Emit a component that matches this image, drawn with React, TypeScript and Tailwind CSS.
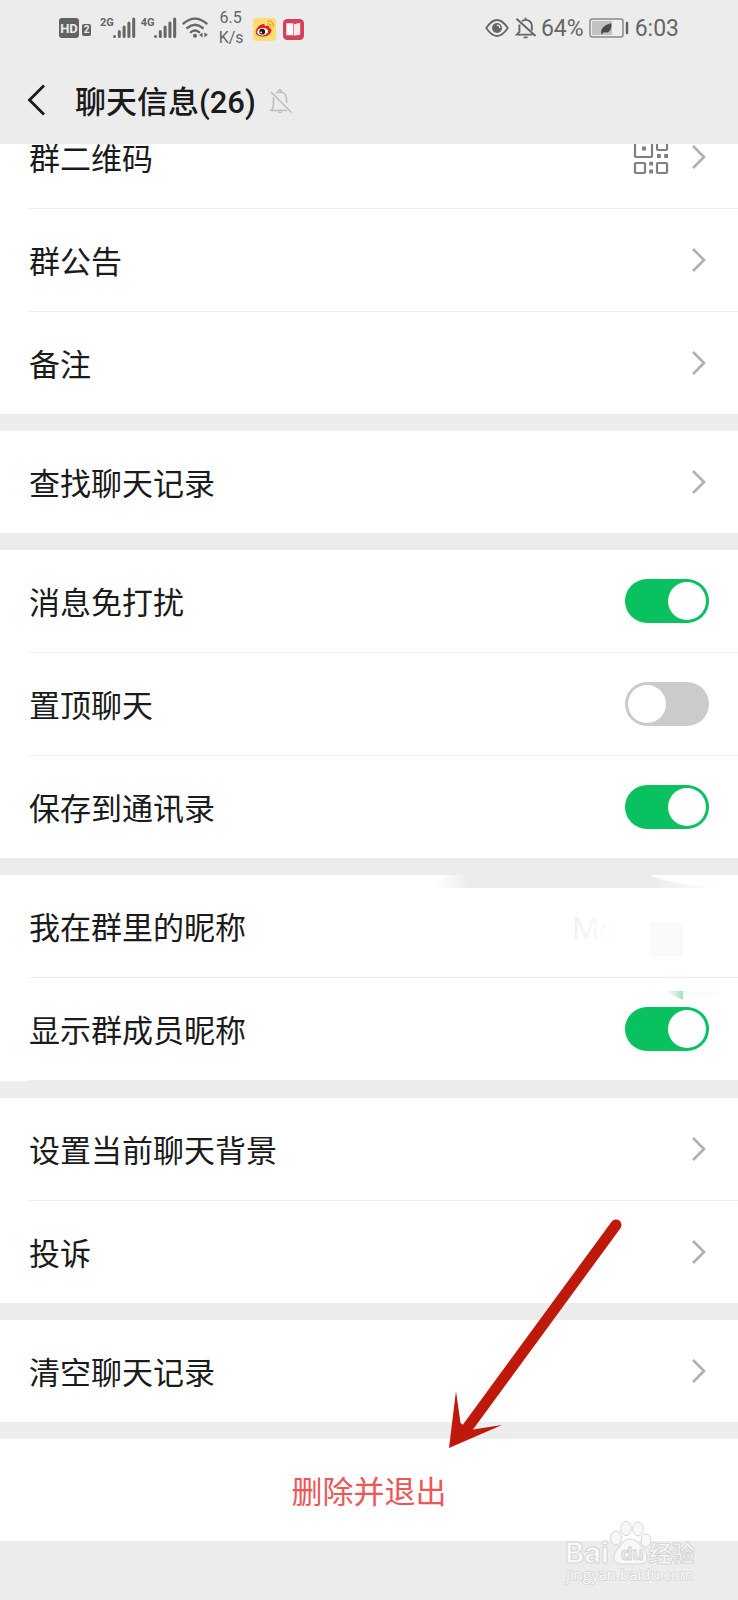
import React, { useState } from "react";

interface Item {
  label: string;
  kind: "link" | "switch" | "value";
  on?: boolean;
  qr?: boolean;
}

const groups: Item[][] = [
  [
    { label: "群二维码", kind: "link", qr: true },
    { label: "群公告", kind: "link" },
    { label: "备注", kind: "link" },
  ],
  [{ label: "查找聊天记录", kind: "link" }],
  [
    { label: "消息免打扰", kind: "switch", on: true },
    { label: "置顶聊天", kind: "switch", on: false },
    { label: "保存到通讯录", kind: "switch", on: true },
  ],
  [
    { label: "我在群里的昵称", kind: "value" },
    { label: "显示群成员昵称", kind: "switch", on: true },
  ],
  [
    { label: "设置当前聊天背景", kind: "link" },
    { label: "投诉", kind: "link" },
  ],
  [{ label: "清空聊天记录", kind: "link" }],
];

function Signal({ label }: { label: string }) {
  return (
    <div className="flex">
      <span className="-mr-0.5 text-[11px] leading-[12px] font-bold">{label}</span>
      <svg width="24" height="22" viewBox="0 0 24 22" stroke="currentColor" strokeWidth="3" strokeLinecap="round">
        <path d="M2.5 19.4v.2M7.3 14.5v5.1M12.1 10v9.6M16.9 6v13.6M21.7 2v17.6" />
      </svg>
    </div>
  );
}

function Wifi() {
  return (
    <svg width="27" height="22" viewBox="0 0 27 22" fill="none" stroke="currentColor" strokeWidth="2.3" strokeLinecap="round">
      <path d="M1.5 6.5Q13 -3.2 24.5 6.5M5.2 11Q13 4.4 20.8 11M8.9 15.2Q13 11.8 17.1 15.2" />
      <circle cx="13" cy="18.8" r="2" fill="currentColor" stroke="none" />
      <path d="M20.6 15.5v5l-3.4-2.4zM22.4 15.5v5l3.6-2.9z" fill="currentColor" stroke="none" />
    </svg>
  );
}

function Weibo() {
  return (
    <svg width="23" height="23" viewBox="0 0 24 24">
      <rect width="24" height="24" rx="4" fill="#fbdd70" />
      <path d="M2.8 14.5C3 10.8 7 7 10.2 6.3c1.8-.4 2.4.8 2 2.3 2.6-1 5-.8 4.8 1.7 2.2.8 2.7 2.3 1.9 4.2-1.3 3.3-5.2 4.9-8.9 4.8-4-.1-7.2-1.9-7.2-4.8z" fill="#d8291f" />
      <ellipse cx="10" cy="14.3" rx="5.7" ry="3.9" fill="#fff" transform="rotate(-8 10 14.3)" />
      <circle cx="9.6" cy="14.3" r="3" fill="#1c1512" />
      <circle cx="8.6" cy="15" r="1" fill="#fff" />
      <path d="M15.6 3.4c3.6-.6 6 1.8 5.6 5.4M15.6 6.2c1.8-.2 3 .9 2.8 2.7" fill="none" stroke="#efa22f" strokeWidth="1.4" strokeLinecap="round" />
    </svg>
  );
}

function Book() {
  return (
    <svg width="21" height="21" viewBox="0 0 22 22">
      <rect width="22" height="22" rx="4.5" fill="#d6405a" />
      <path d="M3.500 4.500h7.200v12.500H3.500z" fill="#fff" />
      <path d="M11.300 5.500 18 4v12.500l-6.700 1z" fill="#ffe9ec" />
    </svg>
  );
}

function StatusBar() {
  return (
    <div className="flex h-14 items-center justify-between pr-[59px] pl-[59px] text-[#666666]">
      <div className="flex items-center">
        <span className="flex h-5 w-5 items-center justify-center rounded-[3px] bg-[#626262] text-[13px] leading-none font-bold text-[#ececec]">
          HD
        </span>
        <span className="mt-1 ml-[3px] flex h-3 w-[9px] items-center justify-center rounded-[2px] bg-[#626262] text-[10px] leading-none font-bold text-[#ececec]">
          2
        </span>
        <div className="ml-[9px] flex gap-[5px]">
          <Signal label="2G" />
          <Signal label="4G" />
          <Wifi />
        </div>
        <div className="ml-[10px] w-6 text-center text-[16px] leading-5">
          <div>6.5</div>
          <div>K/s</div>
        </div>
        <div className="mt-0.5 ml-[10px] flex items-center gap-[7px]">
          <Weibo />
          <Book />
        </div>
      </div>
      <div className="flex items-center">
        <svg width="24" height="20" viewBox="0 0 24 20" fill="none" stroke="currentColor" strokeWidth="1.8">
          <path d="M1.2 10Q12-6 22.8 10 12 26 1.2 10z" />
          <circle cx="12" cy="10" r="5" fill="currentColor" stroke="none" />
          <path d="M12 7.2a2.8 2.8 0 0 1 2.8 2.8" stroke="#ececec" strokeWidth="1.2" />
        </svg>
        <svg className="ml-[6px]" width="22" height="22" viewBox="0 0 22 22" fill="none" stroke="currentColor" strokeWidth="1.9">
          <path d="M4.4 7.5V15L2 17.6h15.6M7 4.2Q8.4 2.9 10.6 2.9c3.6 0 6.2 2.2 6.2 5.9v4.8M10.6 3V.8M8.6 20.4h4M1.5 1.8 20.6 19" />
        </svg>
        <span className="ml-[4px] pt-0.5 text-[23px] leading-6">64%</span>
        <svg className="ml-[5px]" width="40" height="20" viewBox="0 0 40 20">
          <rect x="1" y="1" width="33" height="18" rx="2.5" fill="none" stroke="#8a8a8a" strokeWidth="1.5" />
          <rect x="3" y="3" width="20" height="14" fill="#c2c2c2" />
          <path d="M12.5 16c-1.6-6 3.5-9.4 9.8-10.8.8 6.6-2.6 10.8-7.8 9l-1.2 2z" fill="#4a4a4a" />
          <path d="M38 5v10" stroke="#626262" strokeWidth="2.4" strokeLinecap="round" />
        </svg>
        <time className="ml-[6px] pt-0.5 text-[23px] leading-6">6:03</time>
      </div>
    </div>
  );
}

function Chevron() {
  return (
    <svg width="14" height="24" viewBox="0 0 14 24" fill="none" stroke="#b0b0b0" strokeWidth="2.6">
      <path d="M1 1l11 11L1 23" />
    </svg>
  );
}

function QrIcon() {
  return (
    <svg width="36" height="36" viewBox="0 0 36 36" fill="none" stroke="#7f7f7f" strokeWidth="2.200">
      <rect x="2" y="0" width="17" height="18" rx="1" />
      <rect x="24" y="0" width="10" height="11" rx="1" />
      <rect x="2" y="24" width="10" height="10" rx="1" />
      <rect x="24" y="24" width="10" height="10" rx="1" />
      <path d="M9 9.500h4M24 17h3.800M31.200 17H35M16.200 24.700h3.800M16.200 32.500h3.800" strokeWidth="3.800" />
    </svg>
  );
}

// Leftovers of the erased nickname
function Smudge() {
  return (
    <svg className="pointer-events-none absolute top-0 right-0" width="304" height="130" viewBox="0 0 304 130">
      <defs>
        <linearGradient id="band" x1="0" x2="1">
          <stop offset="0" stopColor="#ececec" stopOpacity="0" />
          <stop offset=".12" stopColor="#ececec" />
          <stop offset=".75" stopColor="#ececec" />
          <stop offset="1" stopColor="#ececec" stopOpacity="0" />
        </linearGradient>
        <linearGradient id="wedge" x1="0" x2="1">
          <stop offset="0" stopColor="#b9e8cf" stopOpacity="0" />
          <stop offset="1" stopColor="#a5dfc0" />
        </linearGradient>
      </defs>
      <path d="M0 13 14 0H216Q232 9 290 13z" fill="url(#band)" />
      <rect x="216" y="47" width="33" height="34" fill="#fafafa" />
      <path d="M230 116h19v9z" fill="url(#wedge)" />
      <path d="M249 116h32v4h-32z" fill="#f6fdf9" />
    </svg>
  );
}

function Row({ item }: { item: Item }) {
  const [on, setOn] = useState(!!item.on);
  const row = "flex h-[102px] w-full items-center justify-between pr-[29px] text-left";
  const label = <span className="pt-1.5">{item.label}</span>;

  if (item.kind === "switch") {
    return (
      <label className={row}>
        {label}
        <input
          type="checkbox"
          role="switch"
          checked={on}
          onChange={() => setOn(!on)}
          className="h-11 w-[84px] appearance-none rounded-full bg-[#cbcbcb] p-[3px] before:block before:h-[38px] before:w-[38px] before:rounded-full before:bg-white checked:bg-[#0ac160] checked:before:ml-10"
        />
      </label>
    );
  }

  if (item.kind === "value") {
    return (
      <button type="button" className={row}>
        {label}
        <span className="mr-[92px] bg-gradient-to-r from-[#f0f0f0] to-white bg-clip-text pt-1.5 text-transparent">Mo</span>
      </button>
    );
  }

  return (
    <button type="button" className={row}>
      {label}
      <span className="flex items-center gap-[23px] pr-[3px]">
        {item.qr && <QrIcon />}
        <Chevron />
      </span>
    </button>
  );
}

function Watermark() {
  return (
    <svg className="absolute right-[36px] bottom-[17px] overflow-visible" width="140" height="68" viewBox="0 0 140 68">
      <g fill="#f8f8f8" stroke="#d6d6d6" strokeWidth="1">
        <ellipse cx="54" cy="22" rx="5.500" ry="7" />
        <ellipse cx="64" cy="12.500" rx="5.200" ry="7" />
        <ellipse cx="76" cy="13" rx="5.200" ry="7" />
        <ellipse cx="84" cy="24.500" rx="5" ry="6.500" />
        <path d="M68 23c-6 0-7.500 5-12 9.500-6 6-5.500 15.500 3 15.500h19c8.500 0 9-9.500 3-15.500C76.500 28 75 23 68 23z" />
        <g fontFamily="Inter, sans-serif" fontWeight="700">
          <text x="3" y="47" fontSize="29">Bai</text>
          <text x="59" y="44" fontSize="18" fill="#ececec">du</text>
        </g>
        <text x="87" y="46" fontSize="23" fontWeight="700" fontFamily="Noto Sans CJK SC, sans-serif">经验</text>
      </g>
      <text x="4" y="64" fontSize="15" fontFamily="Open Sans, sans-serif" fill="#fafafa" stroke="#d4d4d4" strokeWidth="1.500" paintOrder="stroke">
        jingyan.baidu.com
      </text>
    </svg>
  );
}

export default function App() {
  return (
    <div className="relative flex min-h-screen flex-col bg-[#ececec] font-['Roboto','Noto_Sans_CJK_SC',sans-serif] text-[#1b1b1b]">
      <header className="relative z-10 bg-[#ececec]">
        <StatusBar />
        <div className="flex h-[88px] items-center pl-[27px]">
          <button type="button" aria-label="返回">
            <svg width="18" height="32" viewBox="0 0 18 32" fill="none" stroke="#1b1b1b" strokeWidth="2.8">
              <path d="M17 1.500 2.500 16 17 30.500" />
            </svg>
          </button>
          <h1 className="ml-[30px] pt-1.5 text-[31px] leading-10 font-medium">聊天信息(26)</h1>
          <svg className="mt-0.5 ml-[13px]" width="24" height="26" viewBox="0 0 24 26" fill="none" stroke="#bdbdbd" strokeWidth="1.6">
            <path d="M1 22.500h17M3 22q1.500-3 1.500-7V9M7 5.500Q8.500 4 11 4c4 0 6.500 3 6.500 7v4M9 3.500 11 1.500l2 2M9.500 24.500h3M2 4l20.500 20.500" />
          </svg>
        </div>
      </header>

      {/* list is scrolled a little, first row slides under the header */}
      <main className="-mt-[38px] flex flex-col gap-[17px] text-[31px] leading-10">
        {groups.map((group) => (
          <section key={group[0].label} className="relative divide-y divide-[#eeeeee] bg-white pl-[29px]">
            {group.map((item) => (
              <div key={item.label}>
                <Row item={item} />
              </div>
            ))}
            {group[0].kind === "value" && <Smudge />}
          </section>
        ))}
        <button type="button" className="h-[102px] bg-white pt-1.5 text-[#ee5658]">
          删除并退出
        </button>
      </main>

      <footer className="relative h-[60px]">
        <Watermark />
        <svg className="pointer-events-none absolute right-[114px] bottom-[151px]" width="176" height="234" viewBox="0 0 176 234" fill="#bf190b">
          <path d="M168 9 20 211" stroke="#bf190b" strokeWidth="11" strokeLinecap="round" />
          <path d="M1 232 8 175 12.500 207 22 214 54 209z" />
        </svg>
      </footer>
    </div>
  );
}
